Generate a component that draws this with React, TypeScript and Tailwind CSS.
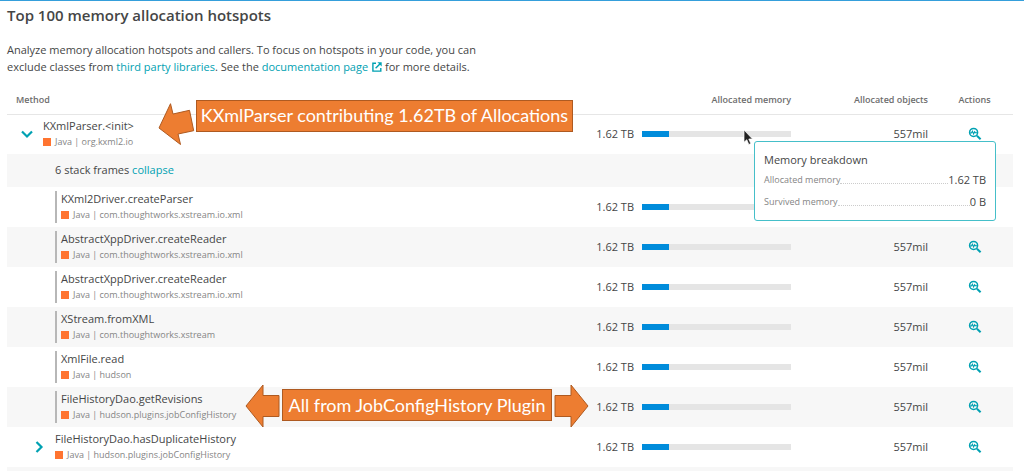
import { clsx } from 'clsx';

interface Frame {
  name: string;
  pkg: string;
  kind: 'root' | 'frame' | 'leaf';
}

const root: Frame = { name: 'KXmlParser.<init>', pkg: 'org.kxml2.io', kind: 'root' };

const frames: Frame[] = [
  { name: 'KXml2Driver.createParser', pkg: 'com.thoughtworks.xstream.io.xml', kind: 'frame' },
  { name: 'AbstractXppDriver.createReader', pkg: 'com.thoughtworks.xstream.io.xml', kind: 'frame' },
  { name: 'AbstractXppDriver.createReader', pkg: 'com.thoughtworks.xstream.io.xml', kind: 'frame' },
  { name: 'XStream.fromXML', pkg: 'com.thoughtworks.xstream', kind: 'frame' },
  { name: 'XmlFile.read', pkg: 'hudson', kind: 'frame' },
  { name: 'FileHistoryDao.getRevisions', pkg: 'hudson.plugins.jobConfigHistory', kind: 'frame' },
  { name: 'FileHistoryDao.hasDuplicateHistory', pkg: 'hudson.plugins.jobConfigHistory', kind: 'leaf' },
];

function ExternalIcon() {
  return (
    <svg viewBox="0 0 10 10" className="ml-1 inline-block size-[10px] align-[-1px]" fill="none" stroke="currentColor" strokeWidth="1.4">
      <path d="M4 1.2H.9v7.9h7.9V6" />
      <path d="M3.6 6.3 8.4 1.5" />
      <path d="M5.4.3h4.3v4.3z" fill="currentColor" stroke="none" />
    </svg>
  );
}

function AnalyzeIcon() {
  return (
    <svg viewBox="0 0 14 14" className="size-[14px]" fill="none" stroke="currentColor">
      <circle cx="5.6" cy="5.4" r="4" strokeWidth="1.5" />
      <path d="M2 6h1.400l1-1.700 1.200 2.700 1-2.200.8.9h1.800" strokeWidth="1.1" />
      <path d="m8.900 8.700 3.700 3.600" strokeWidth="2" />
    </svg>
  );
}

function Toggle({ open }: { open: boolean }) {
  return (
    <button
      type="button"
      aria-label={open ? 'Collapse' : 'Expand'}
      className={clsx('flex w-4 shrink-0 justify-center text-[#00a1b2]', open ? 'ml-3' : 'ml-6')}
    >
      <svg viewBox="0 0 12 12" className={clsx('size-3', !open && '-rotate-90')} fill="none" stroke="currentColor" strokeWidth="2.2">
        <path d="m1 3.5 5 5 5-5" />
      </svg>
    </button>
  );
}

function Method({ frame }: { frame: Frame }) {
  return (
    <div className="flex items-center">
      {frame.kind !== 'frame' && <Toggle open={frame.kind === 'root'} />}
      <div className={clsx('h-8', frame.kind === 'frame' ? 'ml-12 border-l-2 border-[#b7b7b7] pl-1' : 'ml-2')}>
        <div className="text-[11px] leading-4">{frame.name}</div>
        <div className="flex items-center gap-1 text-[9px] leading-4 text-[#858585]">
          <span className="size-2 bg-[#ff7430]" />
          <span>Java | {frame.pkg}</span>
        </div>
      </div>
    </div>
  );
}

function MemoryTooltip() {
  return (
    <div className="absolute top-[26px] left-[194px] z-10 w-[242px] rounded-[3px] border border-[#45bfc9] bg-white px-[9px] py-2 text-left">
      <div className="text-[11px] leading-5">Memory breakdown</div>
      <div className="flex items-end leading-5">
        <span className="text-[9px] text-[#858585]">Allocated memory</span>
        <span className="mb-[6px] grow border-b border-dotted border-[#cccccc]" />
        <span className="text-[11px]">1.62 TB</span>
      </div>
      <div className="flex items-end pt-[2px] leading-5">
        <span className="text-[9px] text-[#858585]">Survived memory</span>
        <span className="mb-[6px] grow border-b border-dotted border-[#cccccc]" />
        <span className="text-[11px]">0 B</span>
      </div>
    </div>
  );
}

function Cursor() {
  return (
    <svg viewBox="0 0 10 17" className="absolute top-[14px] left-[183px] z-20 h-[17px] w-[10px]">
      <path d="M1 1v12.2l2.8-2.5 2 4.8 2-.9-2-4.6h3.7z" fill="#222" stroke="#fff" strokeWidth=".7" />
    </svg>
  );
}

function AllocationNote() {
  return (
    <div className="absolute top-[-15px] left-[151px] z-10 flex items-start gap-[1px]">
      <svg viewBox="0 0 37 46" className="h-[46px] w-[37px]" fill="#ed7d31" stroke="#ae5a21">
        <path d="M1 28 12.5 3.7 15 14l16.5-3.7 4.2 20.4L20 34l2.5 10.5z" />
      </svg>
      <div className="flex h-8 w-[377px] items-center justify-center border border-[#ae5a21] bg-[#ed7d31] font-[Lato] text-[18px] whitespace-nowrap text-white">
        KXmlParser contributing 1.62TB of Allocations
      </div>
    </div>
  );
}

function PluginNote() {
  return (
    <div className="absolute top-[-4px] left-[238px] z-10 flex items-center gap-[2px]">
      <svg viewBox="0 0 35 44" className="h-11 w-[35px]" fill="#ed7d31" stroke="#ae5a21">
        <path d="M1 23 18 2v10.500h16v21H18V44z" />
      </svg>
      <div className="flex h-8 w-[270px] items-center justify-center border border-[#ae5a21] bg-[#ed7d31] font-[Lato] text-[18px] whitespace-nowrap text-white">
        All from JobConfigHistory Plugin
      </div>
      <svg viewBox="0 0 35 44" className="h-11 w-[35px]" fill="#ed7d31" stroke="#ae5a21">
        <path d="M34 23 17 2v10.500H1v21h16V44z" />
      </svg>
    </div>
  );
}

function FrameRow({ frame, striped }: { frame: Frame; striped?: boolean }) {
  return (
    <tr className={clsx('h-10', striped && 'bg-[#f7f7f7]')}>
      <td className="relative">
        <Method frame={frame} />
        {frame.kind === 'root' && <AllocationNote />}
        {frame.name === 'FileHistoryDao.getRevisions' && <PluginNote />}
      </td>
      <td className="relative pr-2">
        <div className="flex items-center justify-end gap-2">
          <span className="text-[11px]">1.62 TB</span>
          <div className="h-[6px] w-[149px] bg-[#e5e5e5]">
            <div className="h-full w-[27px] bg-[#008cdb]" />
          </div>
        </div>
        {frame.kind === 'root' && (
          <>
            <Cursor />
            <MemoryTooltip />
          </>
        )}
      </td>
      <td className="pr-2 text-right text-[11px]">557mil</td>
      <td>
        <button type="button" aria-label="Analyze" className="mx-auto block text-[#00a1b2]">
          <AnalyzeIcon />
        </button>
      </td>
    </tr>
  );
}

export default function App() {
  return (
    <main className="border-t border-[#359fdb] bg-white pr-[11px] pl-[7px] font-['Open_Sans',sans-serif] text-[#454646]">
      <h1 className="pt-[2px] text-[15px] leading-6 font-semibold">Top 100 memory allocation hotspots</h1>
      <p className="mt-[14px] max-w-[480px] text-[11px] leading-[17px]">
        Analyze memory allocation hotspots and callers. To focus on hotspots in your code, you can
        <br />
        exclude classes from <a href="#libraries" className="text-[#00a1b2]">third party libraries</a>. See the{' '}
        <a href="#docs" className="text-[#00a1b2]">
          documentation page
          <ExternalIcon />
        </a>{' '}
        for more details.
      </p>

      <table className="mt-[11px] w-full table-fixed border-collapse">
        <colgroup>
          <col />
          <col className="w-[239px]" />
          <col className="w-[137px]" />
          <col className="w-[77px]" />
        </colgroup>
        <thead>
          <tr className="h-7 border-b border-[#e6e6e6] text-[9px] text-[#6d6d6d]">
            <th className="pl-[9px] text-left font-semibold">Method</th>
            <th className="pr-2 text-right font-semibold">Allocated memory</th>
            <th className="pr-2 text-right font-semibold">Allocated objects</th>
            <th className="text-center font-semibold">Actions</th>
          </tr>
        </thead>
        <tbody>
          <FrameRow frame={root} />
          <tr className="h-[33px] bg-[#f7f7f7]">
            <td colSpan={4} className="pl-12 text-[11px]">
              6 stack frames <button type="button" className="text-[#00a1b2]">collapse</button>
            </td>
          </tr>
          {frames.map((frame, i) => (
            <FrameRow key={i} frame={frame} striped={i % 2 === 1} />
          ))}
        </tbody>
      </table>
      <div className="h-1 bg-[#f7f7f7]" />
    </main>
  );
}
